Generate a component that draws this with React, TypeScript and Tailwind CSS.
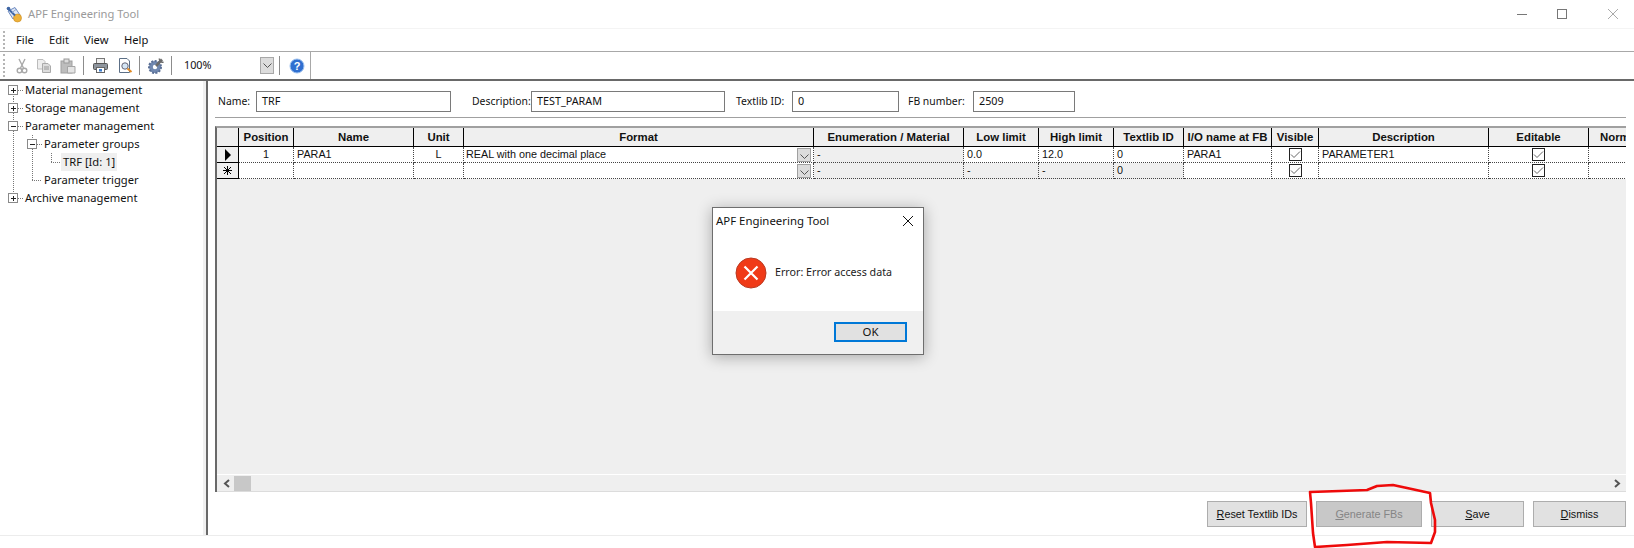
import React from "react";

const sans = "font-['Noto_Sans',sans-serif]";
const arial = "font-['Liberation_Sans',Arial,sans-serif]";

const cols = [
  { w: "w-[55px]", name: "Position", a: "text-center" },
  { w: "w-[120px]", name: "Name", a: "text-center" },
  { w: "w-[50px]", name: "Unit", a: "text-center" },
  { w: "w-[350px]", name: "Format", a: "text-center" },
  { w: "w-[150px]", name: "Enumeration / Material", a: "text-center" },
  { w: "w-[75px]", name: "Low limit", a: "text-center" },
  { w: "w-[75px]", name: "High limit", a: "text-center" },
  { w: "w-[70px]", name: "Textlib ID", a: "text-center" },
  { w: "w-[88px]", name: "I/O name at FB", a: "text-center" },
  { w: "w-[47px]", name: "Visible", a: "text-center" },
  { w: "w-[170px]", name: "Description", a: "text-center" },
  { w: "w-[100px]", name: "Editable", a: "text-center" },
  { w: "w-[100px]", name: "Norm", a: "text-left pl-[11px]" },
];

type Cell = { t?: string; grey?: boolean; center?: boolean; check?: boolean; combo?: boolean };

const row1: Cell[] = [
  { t: "1", center: true },
  { t: "PARA1" },
  { t: "L", center: true },
  { t: "REAL with one decimal place", combo: true },
  { t: "-", grey: true },
  { t: "0.0" },
  { t: "12.0" },
  { t: "0" },
  { t: "PARA1" },
  { check: true },
  { t: "PARAMETER1" },
  { check: true },
  {},
];
const row2: Cell[] = [
  {},
  {},
  {},
  { combo: true },
  { t: "-", grey: true },
  { t: "-", grey: true },
  { t: "-", grey: true },
  { t: "0", grey: true },
  {},
  { check: true },
  {},
  { check: true },
  {},
];

function Chevron() {
  return (
    <svg width="9" height="5" viewBox="0 0 9 5" fill="none" stroke="#555" strokeWidth="1">
      <path d="M0.5 0.5 L4.5 4.5 L8.5 0.5" />
    </svg>
  );
}

function Check() {
  return (
    <div className="w-[13px] h-[13px] border border-[#222] bg-white flex items-center justify-center">
      <svg width="11" height="11" viewBox="0 0 11 11" fill="none" stroke="#666" strokeWidth="1">
        <path d="M1 5.5 L4 8.5 L10 2.5" />
      </svg>
    </div>
  );
}

function GridRow({ cells, marker }: { cells: Cell[]; marker: React.ReactNode }) {
  return (
    <div className="flex h-[16px] shrink-0">
      <div className="w-[22px] shrink-0 bg-[#efefef] border-r border-b border-black flex items-center justify-center">
        {marker}
      </div>
      {cells.map((c, i) => (
        <div
          key={i}
          className={`${cols[i].w} shrink-0 h-[16px] border-r border-b border-dotted border-r-[#444] border-b-[#444] flex items-center relative ${
            c.grey ? "bg-[#efefef]" : "bg-white"
          } ${c.center || c.check ? "justify-center" : c.combo ? "pl-[2px]" : "pl-[3px]"} text-[10.8px] leading-none text-[#111] whitespace-nowrap`}
        >
          {c.check ? <Check /> : c.t}
          {c.combo && (
            <div className="absolute right-[2px] top-[1px] w-[14px] h-[14px] bg-[#dcdcdc] border border-[#a0a0a0] flex items-end justify-center pb-[2px]">
              <Chevron />
            </div>
          )}
        </div>
      ))}
    </div>
  );
}

function Box({ x, plus }: { x: number; plus: boolean }) {
  return (
    <g>
      <rect x={x - 4.5} y={4.5} width="9" height="9" fill="#fff" stroke="#8a8a8a" />
      <path d={`M${x - 2} 9.5 H${x + 3}`} stroke="#222" />
      {plus && <path d={`M${x + 0.5} 7 V12`} stroke="#222" />}
    </g>
  );
}

function TreeRow({
  label,
  lines,
  box,
  hx,
  hFrom,
  indent,
  selected,
}: {
  label: string;
  lines: string[];
  box?: { x: number; plus: boolean };
  hx?: number;
  hFrom?: number;
  indent: number;
  selected?: boolean;
}) {
  return (
    <div className="flex h-[18px] items-center">
      <svg width={indent} height="18" className="shrink-0" fill="none">
        {lines.map((d, i) => (
          <path key={i} d={d} stroke="#777" strokeDasharray="1 1" />
        ))}
        {hx !== undefined && <path d={`M${hFrom} 9.5 H${hx}`} stroke="#777" strokeDasharray="1 1" />}
        {box && <Box x={box.x} plus={box.plus} />}
      </svg>
      <span
        className={`${sans} text-[11.2px] text-[#111] whitespace-nowrap leading-[18px] px-[2px] ${selected ? "bg-[#efefef]" : ""}`}
      >
        {label}
      </span>
    </div>
  );
}

function Btn({ w, u, rest, disabled }: { w: string; u: string; rest: string; disabled?: boolean }) {
  return (
    <div
      className={`${w} h-[26px] border border-[#adadad] flex items-center justify-center ${arial} text-[10.8px] ${
        disabled ? "bg-[#c8c8c8] text-[#858585]" : "bg-[#e1e1e1] text-[#111]"
      }`}
    >
      <span>
        <u>{u}</u>
        {rest}
      </span>
    </div>
  );
}

function Sep() {
  return <div className="w-px h-[19px] bg-[#8c8c8c] shrink-0" />;
}

function Grip() {
  return <div className="w-[2px] self-stretch my-[2px] ml-[3px] border-l-2 border-dotted border-[#b5b5b5] shrink-0" />;
}

function Field({ label, labelW, w, value, ml }: { label: string; labelW: string; w: string; value: string; ml: string }) {
  return (
    <div className={`flex items-center ${ml}`}>
      <div className={`${labelW} ${sans} text-[10.4px] text-[#111] whitespace-nowrap`}>{label}</div>
      <div className={`${w} h-[21px] border border-[#7a7a7a] bg-white flex items-center pl-[5px] ${sans} text-[10.8px] text-[#111]`}>
        {value}
      </div>
    </div>
  );
}

export default function App() {
  return (
    <div className="relative w-[1634px] h-[548px] bg-white overflow-hidden">
      {/* Title bar */}
      <div className="h-[29px] flex items-center border-b border-[#f4f4f4]">
        <svg width="17" height="17" viewBox="0 0 17 17" className="ml-[6px] shrink-0">
          <path d="M2 5 L9 1.5 L14 9 L7 13 Z" fill="#dfe7f4" stroke="#6d8ac0" />
          <circle cx="11.5" cy="12" r="4" fill="#eeb23a" stroke="#c98a1c" strokeWidth="0.6" />
          <path d="M1.5 2 L9 9.5" stroke="#3f66a5" strokeWidth="2" />
          <circle cx="2.5" cy="2.5" r="1.8" fill="#3f66a5" />
          <path d="M6 6.5 L10 3.5" stroke="#8aa4d0" strokeWidth="1" />
        </svg>
        <span className={`ml-[5px] ${sans} text-[11.2px] text-[#9a9a9a] whitespace-nowrap`}>APF Engineering Tool</span>
        <div className="ml-auto flex items-center">
          <svg width="12" height="12" viewBox="0 0 12 12" className="mr-[28px]">
            <path d="M1 6.5 H11" stroke="#777" />
          </svg>
          <svg width="12" height="12" viewBox="0 0 12 12" className="mr-[39px]">
            <rect x="1.5" y="1.5" width="9" height="9" fill="none" stroke="#777" />
          </svg>
          <svg width="12" height="12" viewBox="0 0 12 12" className="mr-[15px]">
            <path d="M1 1 L11 11 M11 1 L1 11" stroke="#aaa" />
          </svg>
        </div>
      </div>

      {/* Menu bar */}
      <div className="h-[23px] flex items-center border-b border-[#a8a8a8]">
        <Grip />
        <div className={`flex ${sans} text-[11.2px] text-[#111]`}>
          <span className="ml-[11px] w-[33px]">File</span>
          <span className="w-[35px]">Edit</span>
          <span className="w-[40px]">View</span>
          <span>Help</span>
        </div>
      </div>

      {/* Toolbar */}
      <div className="h-[29px] flex items-center border-b-2 border-[#696969]">
        <div className="w-[311px] h-full flex items-center border-r border-[#a8a8a8] shrink-0">
          <Grip />
          <svg width="16" height="16" viewBox="0 0 16 16" fill="none" stroke="#a9a9a9" strokeWidth="1.4" className="ml-[9px] shrink-0">
            <path d="M5 1 L9.5 10 M11 1 L6.5 10" />
            <circle cx="5.5" cy="12.5" r="2.3" />
            <circle cx="10.5" cy="12.5" r="2.3" />
          </svg>
          <svg width="16" height="16" viewBox="0 0 16 16" className="ml-[6px] shrink-0">
            <path d="M1.5 1.5 H7 L9 3.5 V11 H1.5 Z" fill="#eee" stroke="#bbb" />
            <path d="M6.5 5.5 H12 L14.5 8 V14.5 H6.5 Z" fill="#ddd" stroke="#aaa" />
            <path d="M8 9 H13 M8 11 H13" stroke="#999" />
          </svg>
          <svg width="16" height="16" viewBox="0 0 16 16" className="ml-[8px] shrink-0">
            <rect x="1" y="3" width="11" height="12" fill="#bdbdbd" stroke="#a0a0a0" />
            <rect x="4" y="1" width="5" height="4" fill="#ddd" stroke="#999" />
            <path d="M7.5 8.5 H15 V15 H7.5 Z" fill="#e4e4e4" stroke="#a5a5a5" />
          </svg>
          <div className="ml-[7px]"><Sep /></div>
          <svg width="17" height="17" viewBox="0 0 17 17" className="ml-[8px] shrink-0">
            <rect x="4.5" y="1.5" width="8" height="5" fill="#eee" stroke="#777" />
            <rect x="1.5" y="6.5" width="14" height="6" rx="1" fill="#8d949c" stroke="#555" />
            <rect x="4.5" y="10.5" width="8" height="5" fill="#fff" stroke="#666" />
            <rect x="7" y="12" width="3" height="2.5" fill="#3d7fd0" />
          </svg>
          <svg width="17" height="17" viewBox="0 0 17 17" className="ml-[8px] shrink-0">
            <path d="M2.5 1.5 H10 L12.5 4 V15.5 H2.5 Z" fill="#fff" stroke="#5c6f86" />
            <circle cx="8" cy="9" r="3.2" fill="#d5e6f5" stroke="#667" />
            <path d="M10.5 11.5 L14.5 15" stroke="#e08a24" strokeWidth="2" />
          </svg>
          <div className="ml-[5px]"><Sep /></div>
          <svg width="18" height="18" viewBox="0 0 18 18" className="ml-[7px] shrink-0">
            <circle cx="8" cy="10" r="6" fill="#7088b0" stroke="#5a6f95" strokeWidth="2" strokeDasharray="2 1.4" />
            <circle cx="8" cy="10" r="2.2" fill="#fff" />
            <path d="M9 9 L15 2.5" stroke="#6b6b6b" strokeWidth="2.6" />
            <path d="M12.5 1.5 A3 3 0 0 0 16.5 5" fill="none" stroke="#6b6b6b" strokeWidth="1.6" />
          </svg>
          <div className="ml-[6px]"><Sep /></div>
          <span className={`ml-[12px] w-[76px] ${sans} text-[10.8px] text-[#111]`}>100%</span>
          <div className="w-[14px] h-[17px] bg-[#dcdcdc] border border-[#a8a8a8] flex items-center justify-center shrink-0">
            <Chevron />
          </div>
          <div className="ml-[5px]"><Sep /></div>
          <svg width="16" height="16" viewBox="0 0 16 16" className="ml-[9px] shrink-0">
            <circle cx="8" cy="8" r="7" fill="#2f6fd0" stroke="#9cc0ee" />
            <text x="8" y="12" textAnchor="middle" fontSize="11" fontWeight="700" fill="#fff" fontFamily="Liberation Sans">?</text>
          </svg>
        </div>
      </div>

      {/* Body */}
      <div className="h-[455px] flex border-b border-[#ececec]">
        {/* Tree */}
        <div className="w-[203px] shrink-0 bg-white">
          <TreeRow indent={23} label="Material management" lines={["M13.5 9 V18"]} box={{ x: 13, plus: true }} hFrom={18} hx={23} />
          <TreeRow indent={23} label="Storage management" lines={["M13.5 0 V18"]} box={{ x: 13, plus: true }} hFrom={18} hx={23} />
          <TreeRow indent={23} label="Parameter management" lines={["M13.5 0 V18"]} box={{ x: 13, plus: false }} hFrom={18} hx={23} />
          <TreeRow indent={42} label="Parameter groups" lines={["M13.5 0 V18", "M32.5 0 V18"]} box={{ x: 32, plus: false }} hFrom={37} hx={42} />
          <TreeRow indent={61} label="TRF [Id: 1]" selected lines={["M13.5 0 V18", "M32.5 0 V18", "M51.5 0 V9"]} hFrom={51} hx={61} />
          <TreeRow indent={42} label="Parameter trigger" lines={["M13.5 0 V18", "M32.5 0 V9"]} hFrom={32} hx={42} />
          <TreeRow indent={23} label="Archive management" lines={["M13.5 0 V9"]} box={{ x: 13, plus: true }} hFrom={18} hx={23} />
        </div>
        {/* Splitter */}
        <div className="w-[3px] shrink-0 bg-[#f0f0f0]" />
        <div className="w-[2px] shrink-0 bg-[#696969]" />

        {/* Right panel */}
        <div className="flex-1 min-w-0 flex flex-col pl-[7px] pr-[8px] pt-[10px]">
          <div className="flex h-[21px] pl-[3px]">
            <Field label="Name:" labelW="w-[38px]" w="w-[195px]" value="TRF" ml="" />
            <Field label="Description:" labelW="w-[59px]" w="w-[194px]" value="TEST_PARAM" ml="ml-[21px]" />
            <Field label="Textlib ID:" labelW="w-[56px]" w="w-[107px]" value="0" ml="ml-[11px]" />
            <Field label="FB number:" labelW="w-[65px]" w="w-[102px]" value="2509" ml="ml-[9px]" />
          </div>
          <div className="mt-[5px] h-px bg-[#a0a0a0] shrink-0" />

          {/* Grid */}
          <div className="mt-[8px] h-[366px] border-t-2 border-t-[#a0a0a0] border-l-2 border-l-[#696969] bg-[#efefef] flex flex-col overflow-hidden shrink-0">
            <div className={`flex-1 min-h-0 overflow-hidden ${arial}`}>
              <div className="flex h-[19px]">
                <div className="w-[22px] shrink-0 border-r border-b border-black bg-[#efefef]" />
                {cols.map((c, i) => (
                  <div
                    key={i}
                    className={`${c.w} ${c.a} shrink-0 border-r border-b border-black bg-[#efefef] text-[11.4px] font-bold leading-[18px] text-[#111] whitespace-nowrap`}
                  >
                    {c.name}
                  </div>
                ))}
              </div>
              <GridRow
                cells={row1}
                marker={
                  <svg width="8" height="12" viewBox="0 0 8 12">
                    <path d="M1 0 L7 6 L1 12 Z" fill="#000" />
                  </svg>
                }
              />
              <GridRow
                cells={row2}
                marker={
                  <svg width="9" height="9" viewBox="0 0 9 9" stroke="#000" strokeWidth="1">
                    <path d="M4.5 0 V9 M0 4.5 H9 M1 1 L8 8 M8 1 L1 8" />
                  </svg>
                }
              />
            </div>
            {/* Scrollbar */}
            <div className="h-[18px] shrink-0 border-t border-white border-b border-b-[#dcdcdc] bg-[#efefef] flex items-center">
              <svg width="8" height="9" viewBox="0 0 8 9" className="ml-[6px] shrink-0" fill="none" stroke="#555" strokeWidth="2">
                <path d="M6 1 L2 4.5 L6 8" />
              </svg>
              <div className="ml-[3px] w-[17px] h-[15px] bg-[#c8c8c8] shrink-0" />
              <svg width="8" height="9" viewBox="0 0 8 9" className="ml-auto mr-[5px] shrink-0" fill="none" stroke="#555" strokeWidth="2">
                <path d="M2 1 L6 4.5 L2 8" />
              </svg>
            </div>
          </div>

          {/* Buttons */}
          <div className="mt-[9px] flex justify-end gap-[9px]">
            <Btn w="w-[100px]" u="R" rest="eset Textlib IDs" />
            <Btn w="w-[106px]" u="G" rest="enerate FBs" disabled />
            <Btn w="w-[93px]" u="S" rest="ave" />
            <Btn w="w-[93px]" u="D" rest="ismiss" />
          </div>
        </div>
      </div>

      {/* Dialog */}
      <div className="absolute left-[712px] top-[207px] w-[212px] h-[148px] bg-white border border-[#6e6e6e] shadow-[0_2px_14px_rgba(0,0,0,0.3)] flex flex-col">
        <div className="h-[26px] flex items-center justify-between pl-[3px] pr-[9px] shrink-0">
          <span className={`${sans} text-[11.4px] text-[#111] whitespace-nowrap`}>APF Engineering Tool</span>
          <svg width="12" height="12" viewBox="0 0 12 12">
            <path d="M1 1 L11 11 M11 1 L1 11" stroke="#111" />
          </svg>
        </div>
        <div className="h-[77px] flex items-center pl-[22px] shrink-0">
          <svg width="32" height="32" viewBox="0 0 32 32" className="shrink-0">
            <circle cx="16" cy="16" r="15" fill="#f03a17" stroke="#b93a22" />
            <path d="M9.5 9.5 L22.5 22.5 M22.5 9.5 L9.5 22.5" stroke="#fff" strokeWidth="2.2" />
          </svg>
          <span className={`ml-[8px] ${sans} text-[10.7px] text-[#222] whitespace-nowrap`}>Error: Error access data</span>
        </div>
        <div className="flex-1 bg-[#f0f0f0] flex justify-end items-start pt-[11px] pr-[16px]">
          <div className={`w-[73px] h-[20px] border-2 border-[#0078d7] bg-[#e1e1e1] flex items-center justify-center ${sans} text-[11.4px] text-[#111]`}>
            OK
          </div>
        </div>
      </div>

      {/* Red annotation */}
      <svg className="absolute left-[1300px] top-[470px] pointer-events-none" width="140" height="78" viewBox="1300 470 140 78" fill="none">
        <path
          d="M1310 492 L1340 491 L1367 490 L1377 486 L1393 485 L1407 488 L1430 493 L1431 503 L1435 520 L1435 532 L1431 543 L1387 542 L1347 545 L1315 547 L1313 533 L1311 503 Z"
          stroke="#ee0a0a"
          strokeWidth="2.6"
          strokeLinejoin="round"
        />
      </svg>
    </div>
  );
}
